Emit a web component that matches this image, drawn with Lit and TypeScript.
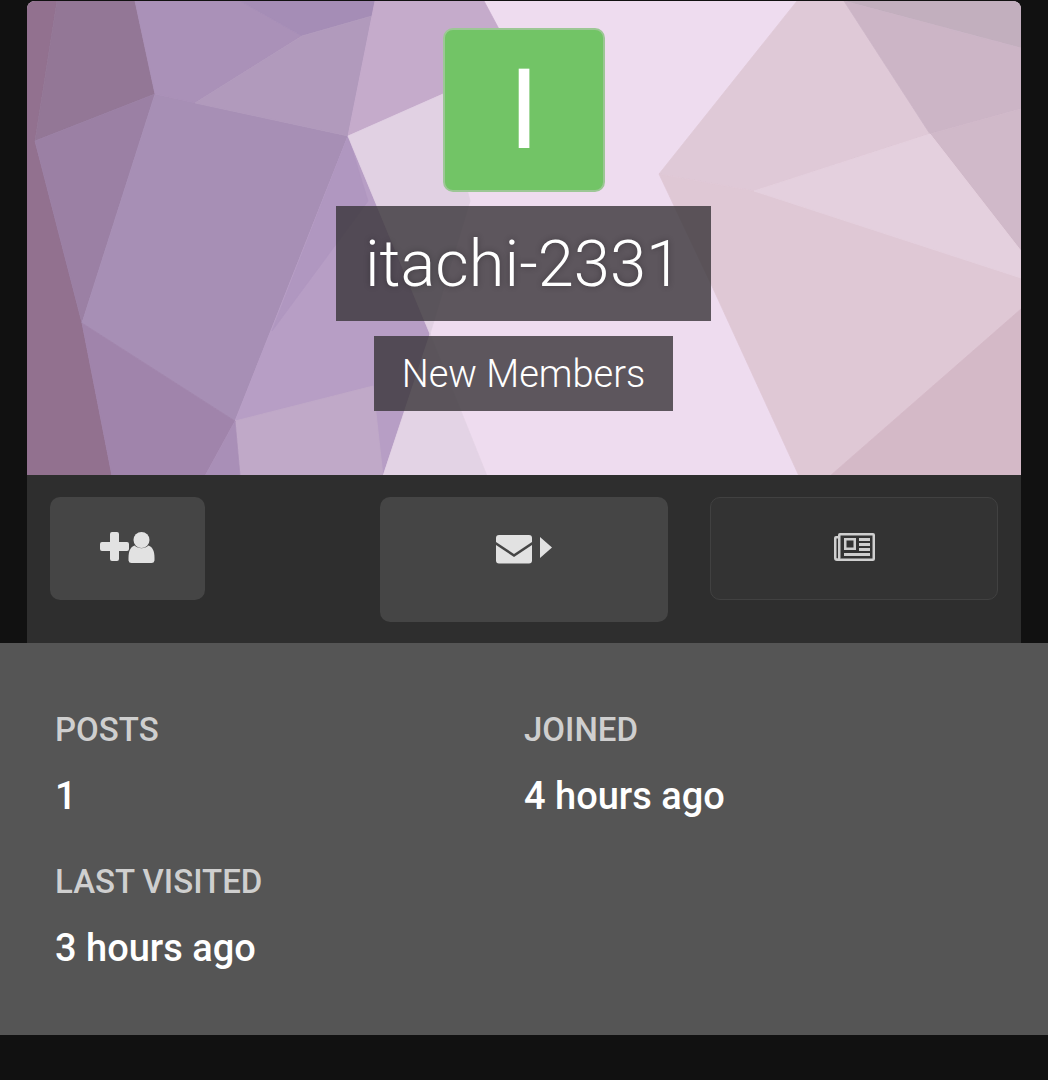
import { LitElement, html, css, svg } from "lit";
import { customElement } from "lit/decorators.js";

const FACETS: [string, string][] = [
  ["27,0 57,0 35,140 82,322 112,475 27,475", "#92718f"],
  ["57,0 135,0 155,93 35,140", "#937796"],
  ["35,140 155,93 82,322", "#9b80a4"],
  ["155,93 348,135 235,420 82,322", "#a78fb5"],
  ["135,0 240,0 302,35 195,102 155,93", "#aa91b8"],
  ["240,0 375,0 372,15 302,35", "#a58db6"],
  ["195,102 302,35 372,15 348,135", "#b19abc"],
  ["375,0 484,0 500,30 443,93 348,135 372,15", "#c5abcb"],
  ["348,135 430,333 383,475 240,475 235,420", "#b79ec5"],
  ["348,135 368,200 272,330", "#b097c0"],
  ["235,420 373,385 383,475 240,475", "#c0a9c8"],
  ["82,322 235,420 205,475 112,475", "#a084ab"],
  ["235,420 240,475 205,475", "#a98fb7"],
  ["348,135 443,93 470,200 430,333", "#e1d1e3"],
  ["383,475 430,333 487,475", "#e3d3e5"],
  ["659,173 797,0 844,0 930,133 754,190", "#dfc9d7"],
  ["844,0 1021,0 1021,47", "#c2afbe"],
  ["844,0 1021,47 1021,108 930,133", "#ccb5c6"],
  ["930,133 1021,108 1021,250", "#d0b9c9"],
  ["659,173 754,190 930,133 1021,250 1021,277 1021,308 830,475 799,475 711,283", "#dfc8d5"],
  ["754,190 930,133 1021,250 1021,277", "#e4d0de"],
  ["1021,308 1021,475 830,475", "#d4b9c7"],
];

@customElement("app-root")
export class AppRoot extends LitElement {
  static styles = css`
    :host {
      display: block;
      min-height: 1080px;
      background: #111;
      font-family: Roboto, "Liberation Sans", sans-serif;
      color: #fff;
    }
    .card {
      margin: 0 27px;
      padding-top: 1px;
    }
    .cover {
      position: relative;
      height: 474px;
      background: #eedcef;
      border-radius: 8px 8px 0 0;
      overflow: hidden;
      display: flex;
      flex-direction: column;
      align-items: center;
      box-sizing: border-box;
      padding-top: 27px;
    }
    .facets {
      position: absolute;
      inset: 0;
      width: 100%;
      height: 100%;
    }
    .facets polygon {
      stroke-width: 0.8;
      stroke-linejoin: round;
    }
    .avatar,
    .name,
    .group {
      position: relative;
    }
    .avatar {
      width: 162px;
      height: 164px;
      box-sizing: border-box;
      background: #72c466;
      border: 2px solid #9cc795;
      border-radius: 10px;
      display: flex;
      align-items: center;
      justify-content: center;
      font-size: 112px;
      line-height: 1;
    }
    .name {
      margin: 14px 1px 0 0;
      height: 115px;
      width: 375px;
      display: flex;
      align-items: center;
      justify-content: center;
      background: rgba(56, 52, 56, 0.8);
      font-size: 65px;
      font-weight: 300;
      text-shadow: 0 0 6px rgba(0, 0, 0, 0.3);
    }
    .group {
      margin: 15px 1px 0 0;
      height: 75px;
      width: 299px;
      display: flex;
      align-items: center;
      justify-content: center;
      background: rgba(56, 52, 56, 0.8);
      font-size: 38px;
      font-weight: 300;
    }
    .actions {
      background: #2e2e2e;
      display: grid;
      grid-template-columns: repeat(3, 288px);
      column-gap: 42px;
      align-items: start;
      padding: 22px 23px;
      height: 168px;
      box-sizing: border-box;
    }
    .btn {
      background: #454545;
      border-radius: 10px;
      height: 103px;
      display: flex;
      justify-content: center;
      padding-top: 35px;
      box-sizing: border-box;
    }
    .btn svg {
      display: block;
      fill: #e2e2e2;
    }
    .add {
      width: 155px;
    }
    .msg {
      height: 125px;
      padding-top: 38px;
    }
    .news {
      background: #333;
      border: 1px solid #414141;
    }
    .btn.news svg {
      fill: #cfcfcf;
    }
    .stats {
      background: #555;
      height: 392px;
      box-sizing: border-box;
      padding: 67px 0 0 55px;
      display: grid;
      grid-template-columns: 469px 1fr;
      grid-auto-rows: 152px;
    }
    .stat-label {
      font-size: 33px;
      font-weight: 500;
      line-height: 40px;
      color: #cfcfcf;
    }
    .stat-value {
      margin-top: 24px;
      font-size: 38px;
      font-weight: 500;
      line-height: 44px;
      color: #fff;
    }
  `;

  render() {
    return html`
      <div class="card">
        <div class="cover">
          <svg class="facets" viewBox="27 0 994 474" preserveAspectRatio="none">
            ${FACETS.map(
              ([points, fill]) => svg`<polygon points=${points} fill=${fill} stroke=${fill}></polygon>`
            )}
          </svg>
          <div class="avatar">I</div>
          <div class="name">itachi-2331</div>
          <div class="group">New Members</div>
        </div>
        <div class="actions">
          <div class="btn add">
            <svg width="56" height="32" viewBox="0 0 56 32">
              <path d="M10 2a2 2 0 0 1 2-2h5a2 2 0 0 1 2 2v8h8a2 2 0 0 1 2 2v5a2 2 0 0 1-2 2h-8v8a2 2 0 0 1-2 2h-5a2 2 0 0 1-2-2v-8H2a2 2 0 0 1-2-2v-5a2 2 0 0 1 2-2h8z"></path>
              <circle cx="41.500" cy="8" r="8"></circle>
              <path d="M28.500 26c0-7 2-11 6-12.500 4 3.500 10 3.500 14 0 4 1.500 6 5.500 6 12.500v2.500a3 3 0 0 1-3 2.500h-20a3 3 0 0 1-3-2.500z"></path>
            </svg>
          </div>
          <div class="btn msg">
            <svg width="57" height="29" viewBox="0 0 57 29">
              <path d="M3 0h30a3 3 0 0 1 3 3v4L18 19 0 7V3a3 3 0 0 1 3-3z"></path>
              <path d="M0 10l18 12 18-12v15.500a3 3 0 0 1-3 3H3a3 3 0 0 1-3-3z"></path>
              <path d="M44 2l12 10.500L44 23z"></path>
            </svg>
          </div>
          <div class="btn news">
            <svg width="41" height="28" viewBox="0 0 41 28">
              <path fill-rule="evenodd" d="M6 0h33a2 2 0 0 1 2 2v24a2 2 0 0 1-2 2H3a3 3 0 0 1-3-3V5a2 2 0 0 1 2-2h2V2a2 2 0 0 1 2-2zM6.500 2.500V25a3 3 0 0 1-.4 .5H38.500V2.500zM2.500 5.500V25a1 1 0 0 0 1.500 0V5.500z"></path>
              <path fill-rule="evenodd" d="M10 5h12v12H10zM12.500 7.500v7h7v-7z"></path>
              <path d="M25 5h11v3H25zM25 10h11v3H25zM25 15h11v3H25zM10 20h26v3H10z"></path>
            </svg>
          </div>
        </div>
      </div>
      <div class="stats">
        <div>
          <div class="stat-label">POSTS</div>
          <div class="stat-value">1</div>
        </div>
        <div>
          <div class="stat-label">JOINED</div>
          <div class="stat-value">4 hours ago</div>
        </div>
        <div>
          <div class="stat-label">LAST VISITED</div>
          <div class="stat-value">3 hours ago</div>
        </div>
      </div>
    `;
  }
}
